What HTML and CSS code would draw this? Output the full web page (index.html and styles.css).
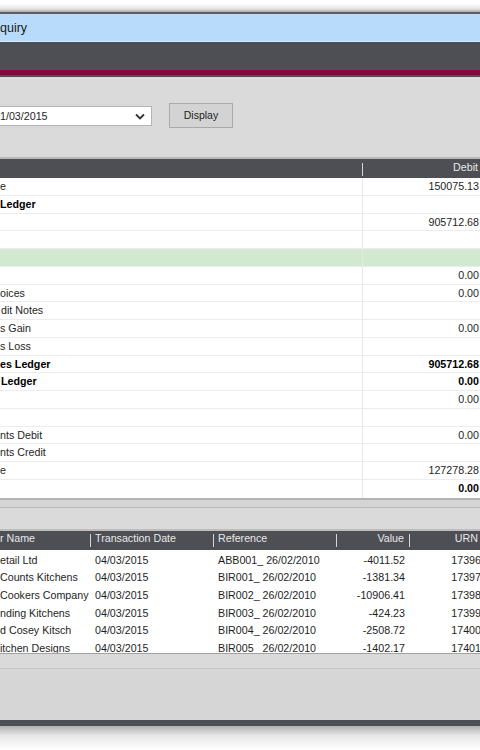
FILE: index.html
```html
<!DOCTYPE html>
<html>
<head>
<meta charset="utf-8">
<link rel="stylesheet" href="styles.css">
</head>
<body>
<div class="screen">
  <div class="top-shadow"></div>
  <div class="frame-edge"></div>
  <div class="titlebar">quiry</div>
  <div class="toolbar"></div>
  <div class="accent"></div>
  <div class="content">
    <div class="filter">
      <div class="select">
        <span class="select-text">1/03/2015</span>
        <svg class="chev" width="10" height="7" viewBox="0 0 10 7"><polyline points="1,1.5 5,5.5 9,1.5" fill="none" stroke="#333" stroke-width="1.8"/></svg>
      </div>
      <div class="btn">Display</div>
    </div>

    <div class="ledger">
      <div class="lhead">
        <div class="lh-label"></div>
        <div class="lh-amt">Debit</div>
      </div>
      <div class="lrow"><div class="lbl">e</div><div class="amt">150075.13</div></div>
      <div class="lrow b"><div class="lbl">Ledger</div><div class="amt"></div></div>
      <div class="lrow"><div class="lbl"></div><div class="amt">905712.68</div></div>
      <div class="lrow"><div class="lbl"></div><div class="amt"></div></div>
      <div class="lrow green"><div class="lbl"></div><div class="amt"></div></div>
      <div class="lrow"><div class="lbl"></div><div class="amt">0.00</div></div>
      <div class="lrow"><div class="lbl">oices</div><div class="amt">0.00</div></div>
      <div class="lrow"><div class="lbl ind">dit Notes</div><div class="amt"></div></div>
      <div class="lrow"><div class="lbl">s Gain</div><div class="amt">0.00</div></div>
      <div class="lrow"><div class="lbl">s Loss</div><div class="amt"></div></div>
      <div class="lrow b"><div class="lbl">es Ledger</div><div class="amt">905712.68</div></div>
      <div class="lrow b"><div class="lbl ind">Ledger</div><div class="amt">0.00</div></div>
      <div class="lrow"><div class="lbl"></div><div class="amt">0.00</div></div>
      <div class="lrow"><div class="lbl"></div><div class="amt"></div></div>
      <div class="lrow"><div class="lbl">nts Debit</div><div class="amt">0.00</div></div>
      <div class="lrow"><div class="lbl">nts Credit</div><div class="amt"></div></div>
      <div class="lrow"><div class="lbl">e</div><div class="amt">127278.28</div></div>
      <div class="lrow"><div class="lbl"></div><div class="amt bold">0.00</div></div>
    </div>
    <div class="splitter"></div>

    <div class="trans">
      <div class="thead">
        <div class="tc c1 sep">r Name</div>
        <div class="tc c2 sep">Transaction Date</div>
        <div class="tc c3 sep">Reference</div>
        <div class="tc c4 sep">Value</div>
        <div class="tc c5">URN</div>
      </div>
      <div class="tbody">
        <div class="trow"><div class="tc c1">etail Ltd</div><div class="tc c2">04/03/2015</div><div class="tc c3">ABB001_ 26/02/2010</div><div class="tc c4">-4011.52</div><div class="tc c5">17396</div></div>
        <div class="trow"><div class="tc c1">Counts Kitchens</div><div class="tc c2">04/03/2015</div><div class="tc c3">BIR001_ 26/02/2010</div><div class="tc c4">-1381.34</div><div class="tc c5">17397</div></div>
        <div class="trow"><div class="tc c1">Cookers Company</div><div class="tc c2">04/03/2015</div><div class="tc c3">BIR002_ 26/02/2010</div><div class="tc c4">-10906.41</div><div class="tc c5">17398</div></div>
        <div class="trow"><div class="tc c1">nding Kitchens</div><div class="tc c2">04/03/2015</div><div class="tc c3">BIR003_ 26/02/2010</div><div class="tc c4">-424.23</div><div class="tc c5">17399</div></div>
        <div class="trow"><div class="tc c1">d Cosey Kitsch</div><div class="tc c2">04/03/2015</div><div class="tc c3">BIR004_ 26/02/2010</div><div class="tc c4">-2508.72</div><div class="tc c5">17400</div></div>
        <div class="trow"><div class="tc c1">itchen Designs</div><div class="tc c2">04/03/2015</div><div class="tc c3">BIR005_ 26/02/2010</div><div class="tc c4">-1402.17</div><div class="tc c5">17401</div></div>
      </div>
    </div>
    <div class="footer-top"></div>
    <div class="footer-fill"></div>
  </div>
  <div class="bottom-bar"></div>
  <div class="bottom-shadow"></div>
</div>
</body>
</html>
```

FILE: styles.css
```css
html, body {
  margin: 0;
  padding: 0;
  background: #ffffff;
}
body {
  width: 480px;
  height: 750px;
  overflow: hidden;
  font-family: "Liberation Sans", Arial, sans-serif;
  font-size: 10.7px;
  color: #1e1e1e;
}
.screen {
  width: 480px;
  overflow: hidden;
}
.top-shadow {
  height: 12px;
  background: linear-gradient(#ffffff 30%, #e2e2e2 75%, #a8a8a8);
}
.frame-edge {
  height: 2px;
  background: #5c5e62;
}
.titlebar {
  height: 27px;
  line-height: 28px;
  background: #b8dbfb;
  border-bottom: 1px solid #d8eafb;
  font-size: 12.5px;
  color: #1a1a1a;
}
.toolbar {
  height: 28px;
  background: #4d4f54;
}
.accent {
  height: 5px;
  background: #7c0a3b;
  border-bottom: 2px solid #4d4f54;
}
.content {
  background: #dadada;
}
.filter {
  display: flex;
  align-items: flex-start;
  padding-top: 26px;
  height: 25px;
  margin-bottom: 29px;
}
.select {
  margin-top: 3px;
  margin-left: -1px;
  width: 145px;
  height: 18px;
  background: #ffffff;
  border: 1px solid #b4b4b4;
  display: flex;
  align-items: center;
  justify-content: space-between;
  padding-right: 6px;
}
.select-text {
  font-size: 10.7px;
  color: #1e1e1e;
}
.chev {
  display: block;
}
.btn {
  margin-left: 17px;
  width: 62px;
  height: 23px;
  line-height: 23px;
  text-align: center;
  background: #d3d3d3;
  border: 1px solid #a9a9a9;
  color: #1e1e1e;
  font-size: 10.5px;
}
.ledger {
  border-top: 2px solid #b9b9b9;
  border-bottom: 2px solid #b3b3b3;
  background: #ffffff;
}
.lhead {
  height: 19px;
  background: #4d4f54;
  display: flex;
  color: #e8e8e8;
}
.lh-label {
  width: 363px;
  position: relative;
}
.lh-label::after {
  content: "";
  position: absolute;
  right: 0;
  top: 4px;
  width: 1px;
  height: 13px;
  background: #d6d6d6;
}
.lh-amt {
  flex: 1;
  text-align: right;
  padding-right: 2px;
  line-height: 17px;
}
.lrow {
  height: 17.78px;
  box-sizing: border-box;
  border-bottom: 1px solid #ececec;
  display: flex;
  line-height: 16.78px;
}
.lrow:last-child {
  border-bottom: none;
}
.lrow.green {
  background: #d1e9d1;
}
.lrow.b {
  font-weight: bold;
  color: #000000;
}
.lbl {
  width: 362px;
  border-right: 1px solid #e8e8e8;
  white-space: nowrap;
}
.lbl.ind {
  padding-left: 1px;
  width: 361px;
}
.amt {
  flex: 1;
  text-align: right;
  padding-right: 1px;
}
.amt.bold {
  font-weight: bold;
  color: #000000;
}
.splitter {
  height: 7px;
  background: #d5d5d5;
  border-bottom: 1px solid #bcbcbc;
  margin-bottom: 21px;
}
.trans {
  width: 484px;
  border-top: 2px solid #bdbdbd;
  border-bottom: 1px solid #a2a2a2;
  background: #ffffff;
}
.thead {
  height: 19px;
  background: #4d4f54;
  color: #e8e8e8;
  display: flex;
}
.thead .tc {
  line-height: 15px;
  position: relative;
}
.thead .sep::after {
  content: "";
  position: absolute;
  right: 0;
  top: 3px;
  width: 1px;
  height: 13px;
  background: #d6d6d6;
}
.tbody {
  height: 101px;
  padding-top: 2px;
  overflow: hidden;
}
.trow {
  height: 17.6px;
  line-height: 17.6px;
  display: flex;
}
.tc {
  box-sizing: border-box;
  white-space: nowrap;
  overflow: hidden;
}
.c1 { width: 91px; }
.c2 { width: 123px; padding-left: 4px; }
.c3 { width: 123px; padding-left: 4px; }
.c4 { width: 73px; text-align: right; padding-right: 5px; }
.c5 { width: 74px; text-align: right; padding-right: 3px; }
.thead .c4 { padding-right: 6px; }
.thead .c5 { padding-right: 6px; }
.footer-top {
  height: 14px;
  border-bottom: 1px solid #c4c4c4;
}
.footer-fill {
  height: 51px;
  background: #d6d6d6;
}
.bottom-bar {
  height: 6px;
  background: #4d4f54;
}
.bottom-shadow {
  height: 24px;
  background: linear-gradient(#b0b0b0, #e6e6e6 40%, #ffffff);
}
```
